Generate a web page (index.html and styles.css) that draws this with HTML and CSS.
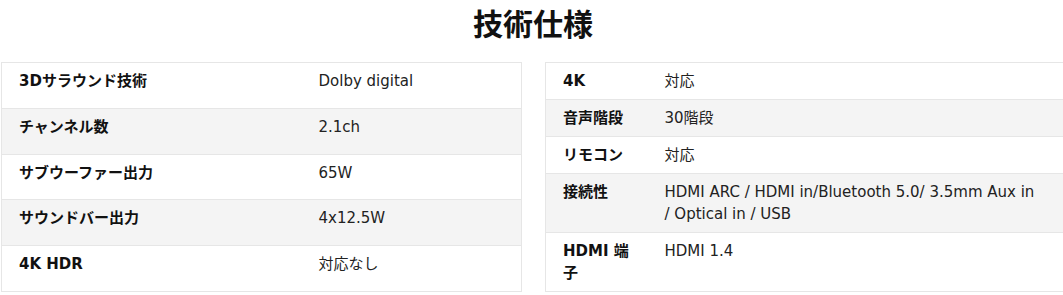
FILE: index.html
```html
<!DOCTYPE html>
<html lang="ja">
<head>
<meta charset="utf-8">
<title>技術仕様</title>
<link rel="stylesheet" href="styles.css">
</head>
<body>
<section class="specs">
  <h2 class="specs-title">技術仕様</h2>
  <div class="specs-grid">
    <div class="specs-col">
      <table class="spec-table spec-left">
        <colgroup><col class="c-label"><col class="c-value"></colgroup>
        <tbody>
          <tr><th>3Dサラウンド技術</th><td>Dolby digital</td></tr>
          <tr><th>チャンネル数</th><td>2.1ch</td></tr>
          <tr><th>サブウーファー出力</th><td>65W</td></tr>
          <tr><th>サウンドバー出力</th><td>4x12.5W</td></tr>
          <tr><th>4K HDR</th><td>対応なし</td></tr>
        </tbody>
      </table>
    </div>
    <div class="specs-col">
      <table class="spec-table spec-right">
        <colgroup><col class="c-label"><col class="c-value"></colgroup>
        <tbody>
          <tr><th>4K</th><td>対応</td></tr>
          <tr><th>音声階段</th><td>30階段</td></tr>
          <tr><th>リモコン</th><td>対応</td></tr>
          <tr><th>接続性</th><td>HDMI ARC / HDMI in/Bluetooth 5.0/ 3.5mm Aux in / Optical in / USB</td></tr>
          <tr><th>HDMI 端子</th><td>HDMI 1.4</td></tr>
        </tbody>
      </table>
    </div>
  </div>
</section>
</body>
</html>
```

FILE: styles.css
```css
html, body {
  margin: 0;
  padding: 0;
  background: #ffffff;
  overflow: hidden;
}

body {
  font-family: "DejaVu Sans", "Noto Sans CJK JP", sans-serif;
  color: #222222;
}

.specs {
  width: 1064px;
  margin-left: 1px;
  padding-top: 4px;
}

.specs-title {
  margin: 0 0 22px;
  font-family: "Noto Sans CJK JP", sans-serif;
  font-size: 30px;
  line-height: 36px;
  font-weight: 700;
  text-align: center;
  color: #111111;
}

.specs-grid {
  display: flex;
  gap: 23px;
  align-items: stretch;
}

.specs-col {
  flex: 0 0 520px;
}

.spec-table {
  width: 520px;
  height: 100%;
  border-collapse: collapse;
  table-layout: fixed;
  border: 1px solid #e6e6e6;
  font-size: 15px;
  line-height: 22px;
}

.spec-table tr {
  border-top: 1px solid #e6e6e6;
}

.spec-table tr:nth-child(even) {
  background: #f4f4f4;
}

.spec-table th,
.spec-table td {
  padding: 7px 16px 7px 17px;
  vertical-align: top;
  text-align: left;
}

.spec-table th {
  font-weight: 700;
  color: #111111;
}

.spec-table td {
  font-weight: 400;
  color: #222222;
}

.spec-right td {
  padding-right: 30px;
}

.spec-left .c-label { width: 300px; }
.spec-left .c-value { width: 220px; }

.spec-right .c-label { width: 102px; }
.spec-right .c-value { width: 418px; }
```
